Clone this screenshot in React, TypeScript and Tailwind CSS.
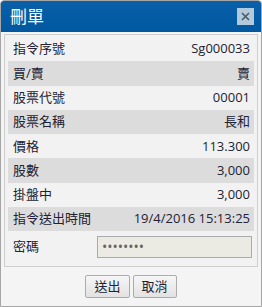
import React from 'react';

const rows: [string, string][] = [
  ['指令序號', 'Sg000033'],
  ['買/賣', '賣'],
  ['股票代號', '00001'],
  ['股票名稱', '長和'],
  ['價格', '113.300'],
  ['股數', '3,000'],
  ['掛盤中', '3,000'],
  ['指令送出時間', '19/4/2016 15:13:25'],
];

const font = { fontFamily: '"Open Sans", "Noto Sans CJK TC", sans-serif' };

export default function App() {
  return (
    <div className="w-[262px] h-[307px] bg-white" style={font}>
      <div className="flex flex-col h-full border border-[#a6a6a6] rounded-t-[4px] bg-[#f4f4f4] overflow-hidden">
        {/* Title bar */}
        <div className="flex items-center justify-between h-[31px] px-[9px] bg-gradient-to-b from-[#0a60a8] to-[#0058a1] shrink-0">
          <span className="text-white text-[17px] leading-none">刪單</span>
          <button className="flex items-center justify-center w-[17px] h-[17px] bg-[#b3c9dc] mr-[-2px]">
            <svg width="9" height="9" viewBox="0 0 9 9">
              <path d="M1 1L8 8M8 1L1 8" stroke="#4d5a66" strokeWidth="1.6" />
            </svg>
          </button>
        </div>

        {/* Body */}
        <div className="flex-1 px-[3px] pt-[2px]">
          <div className="border border-[#cfcfcf] bg-[#f2f2f2] px-[3px] pt-[2px] pb-[4px]">
            {rows.map(([label, value], i) => (
              <div
                key={label}
                className={`flex items-center justify-between h-[24.3px] pl-[5px] pr-[4px] text-[13px] text-[#222233] ${
                  i % 2 === 1 ? 'bg-[#dcdcdc]' : 'bg-[#f2f2f2]'
                }`}
              >
                <span>{label}</span>
                <span>{value}</span>
              </div>
            ))}
            <div className="flex items-center h-[31px] pl-[5px] pr-[2px] text-[13px] text-[#222233]">
              <span className="w-[84px]">密碼</span>
              <div className="flex-1 h-[22px] border border-[#ababab] bg-[#ecebe3] flex items-center pl-[4px] text-[#666] text-[14px] leading-none">
                ••••••••
              </div>
            </div>
          </div>
          <div className="flex justify-center gap-[3px] pt-[8px]">
            <button className="h-[23px] px-[8px] border border-[#acacac] rounded-[2px] bg-gradient-to-b from-[#f6f6f6] to-[#e2e2e2] text-[13px] text-[#222233] leading-none">
              送出
            </button>
            <button className="h-[23px] px-[8px] border border-[#acacac] rounded-[2px] bg-gradient-to-b from-[#f6f6f6] to-[#e2e2e2] text-[13px] text-[#222233] leading-none">
              取消
            </button>
          </div>
        </div>
      </div>
    </div>
  );
}
